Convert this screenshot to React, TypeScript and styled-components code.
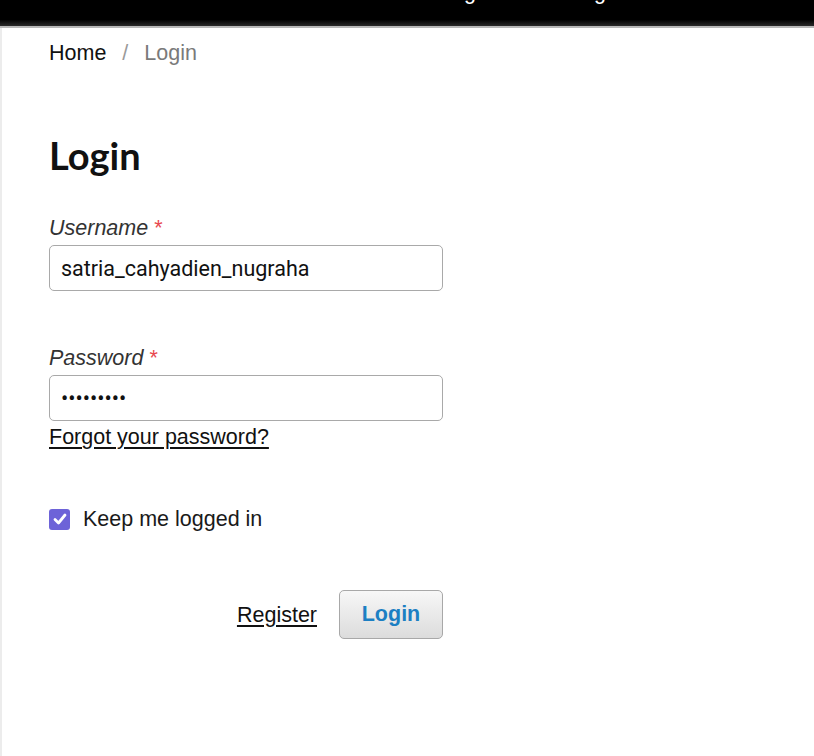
import React from "react";
import styled, {createGlobalStyle} from "styled-components";

const GlobalStyle = createGlobalStyle`
  html, body {
    margin: 0;
    padding: 0;
    background: #ffffff;
  }
  body {
    font-family: "Liberation Sans", Arial, sans-serif;
    color: #1a1a1a;
  }
`

const TopBar = styled.div`
  height: 26px;
  background: linear-gradient(#000 0%, #000 75%, #2a2a2a 100%);
  border-bottom: 2px solid #b9b9b9;
  overflow: hidden;
`

const NavList = styled.div`
  display: flex;
  margin-top: -20px;
  padding-left: 440px;
  column-gap: 74px;
`

const NavItem = styled.span`
  color: #ffffff;
  font-size: 21.5px;
  line-height: 24px;
`

const Page = styled.div`
  min-height: calc(100vh - 28px);
  border-left: 2px solid #ececec;
  padding: 13px 0 0 47px;
  box-sizing: border-box;
`

const Breadcrumb = styled.nav`
  display: flex;
  column-gap: 16px;
  font-size: 21.5px;
  line-height: 24px;
`

const Crumb = styled.span<{ $current?: boolean }>`
  color: ${p => p.$current ? "#7a7a7a" : "#111111"};
`

const Separator = styled.span`
  color: #9a9a9a;
`

const Title = styled.h1`
  margin: 68px 0 0;
  font-family: Lato, "Open Sans", sans-serif;
  font-weight: 700;
  font-size: 38px;
  line-height: 45px;
  color: #111111;
`

const Form = styled.form`
  width: 394px;
  display: flex;
  flex-direction: column;
`

const Field = styled.div<{ $top: number }>`
  margin-top: ${p => p.$top}px;
  display: flex;
  flex-direction: column;
`

const Label = styled.label`
  font-style: italic;
  font-size: 21.5px;
  line-height: 24px;
  color: #333333;
  margin-bottom: 5px;
`

const Required = styled.span`
  color: #e8484f;
  font-style: normal;
`

const TextInput = styled.input`
  box-sizing: border-box;
  width: 100%;
  height: 46px;
  padding: 0 11px;
  border: 1.5px solid #a9a9a9;
  border-radius: 5px;
  font-family: Roboto, "Liberation Sans", sans-serif;
  font-size: 21.5px;
  color: #111111;
  background: #ffffff;
  outline: none;
`

const TextLink = styled.a`
  font-size: 21.5px;
  line-height: 24px;
  color: #111111;
  text-decoration: underline;
  text-underline-offset: 3px;
  cursor: pointer;
`

const ForgotLink = styled(TextLink)`
  margin-top: 4px;
  align-self: flex-start;
`

const CheckRow = styled.label`
  margin-top: 58px;
  display: flex;
  align-items: center;
  column-gap: 13px;
  font-size: 21.5px;
  line-height: 24px;
  color: #1a1a1a;
`

const CheckBox = styled.span`
  width: 21px;
  height: 21px;
  border-radius: 3px;
  background: #6d63d8;
  display: flex;
  align-items: center;
  justify-content: center;
`

const Actions = styled.div`
  margin-top: 59px;
  display: flex;
  justify-content: flex-end;
  align-items: center;
  column-gap: 22px;
`

const SubmitButton = styled.button`
  width: 104px;
  height: 49px;
  border: 1.5px solid #a8a8a8;
  border-radius: 5px;
  background: linear-gradient(#f7f7f7, #dcdcdc);
  color: #1c7fc3;
  font-family: "Liberation Sans", Arial, sans-serif;
  font-weight: 700;
  font-size: 21.5px;
  cursor: pointer;
`

export default function App() {
    return <>
        <GlobalStyle/>
        <TopBar>
            <NavList>
                <NavItem>Login</NavItem>
                <NavItem>Register</NavItem>
            </NavList>
        </TopBar>
        <Page>
            <Breadcrumb>
                <Crumb>Home</Crumb>
                <Separator>/</Separator>
                <Crumb $current>Login</Crumb>
            </Breadcrumb>
            <Title>Login</Title>
            <Form onSubmit={e => e.preventDefault()}>
                <Field $top={38}>
                    <Label>Username <Required>*</Required></Label>
                    <TextInput type="text" defaultValue="satria_cahyadien_nugraha"/>
                </Field>
                <Field $top={55}>
                    <Label>Password <Required>*</Required></Label>
                    <TextInput type="password" defaultValue="123456789"/>
                </Field>
                <ForgotLink>Forgot your password?</ForgotLink>
                <CheckRow>
                    <CheckBox>
                        <svg width="16" height="16" viewBox="0 0 16 16">
                            <path d="M3 8.5 L6.5 12 L13 4" fill="none" stroke="#fff" strokeWidth="2.8"
                                  strokeLinecap="round" strokeLinejoin="round"/>
                        </svg>
                    </CheckBox>
                    Keep me logged in
                </CheckRow>
                <Actions>
                    <TextLink>Register</TextLink>
                    <SubmitButton type="submit">Login</SubmitButton>
                </Actions>
            </Form>
        </Page>
    </>
}
